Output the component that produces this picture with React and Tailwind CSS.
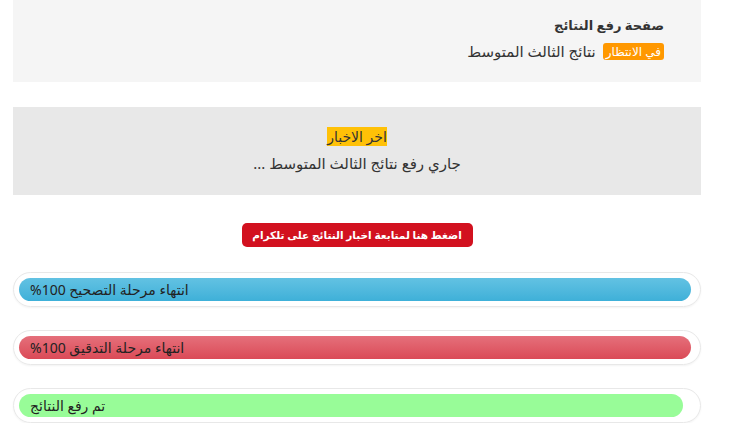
const bars = [
  {
    text: "انتهاء مرحلة التصحيح 100%",
    width: "100%",
    cls: "bg-gradient-to-b from-[#62c2e3] to-[#3eb0d8]",
  },
  {
    text: "انتهاء مرحلة التدقيق 100%",
    width: "100%",
    cls: "bg-gradient-to-b from-[#e56f7b] to-[#da4a57]",
  },
  {
    text: "تم رفع النتائج",
    width: "98.8%",
    cls: "bg-[#98fc98]",
  },
];

export default function App() {
  return (
    <div
      className="w-[730px] bg-white text-[#333] px-[13px]"
      style={{ fontFamily: '"Segoe UI", Tahoma, "Noto Sans", "DejaVu Sans", sans-serif' }}
    >
      <div className="w-[688px]">
        <div dir="rtl" className="bg-[#f5f5f5] h-[82px] pr-[37px] pt-[14px]">
          <h1 className="text-[13px] font-bold leading-[22px]">صفحة رفع النتائج</h1>
          <div className="flex items-center gap-[7px] mt-[5px] text-[15px] leading-[20px]">
            <span className="bg-[#ff9800] text-white text-[12px] leading-[17px] px-[3px] rounded-[3px]">
              في الانتظار
            </span>
            <span>نتائج الثالث المتوسط</span>
          </div>
        </div>

        <div dir="rtl" className="mt-[25px] bg-[#e8e8e8] h-[88px] flex flex-col items-center pt-[20px]">
          <span className="bg-[#ffc107] text-[14px] leading-[19px]">اخر الاخبار</span>
          <span className="text-[15px] leading-[22px] mt-[6px]">جاري رفع نتائج الثالث المتوسط ...</span>
        </div>

        <div dir="rtl" className="flex justify-center mt-[28px]">
          <a className="bg-[#d2111f] text-white text-[10.5px] font-bold leading-[24px] w-[231px] text-center rounded-[5px] whitespace-nowrap">
            اضغط هنا لمتابعة اخبار النتائج على تلكرام
          </a>
        </div>

        <div className="mt-[25px] flex flex-col gap-[23px]">
          {bars.map((b, i) => (
            <div
              key={i}
              className="h-[35px] rounded-full border border-[#e8e8e8] shadow-[0_1px_2px_rgba(0,0,0,0.05)] pl-[5px] pr-[9px] py-[5px]"
            >
              <div
                className={`h-[23px] rounded-full ${b.cls} text-[14px] leading-[23px] pl-[11px] text-[#222]`}
                style={{ width: b.width }}
              >
                <span dir="rtl">{b.text}</span>
              </div>
            </div>
          ))}
        </div>
      </div>
    </div>
  );
}
